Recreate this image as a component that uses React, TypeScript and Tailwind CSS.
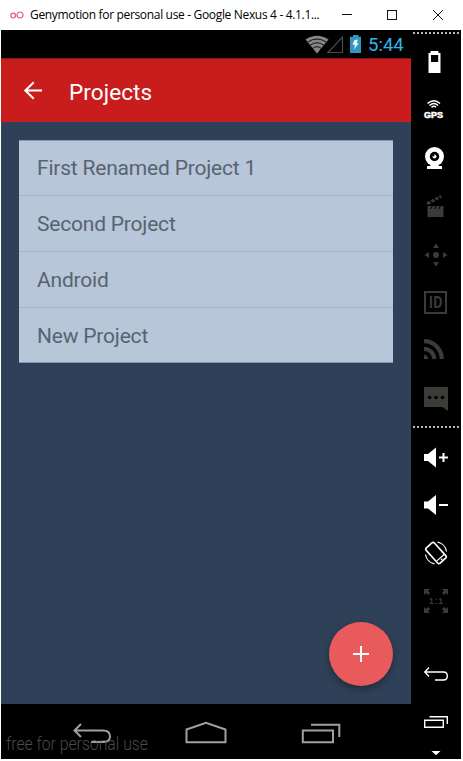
import type { ReactNode } from "react";

const projects = ["First Renamed Project 1", "Second Project", "Android", "New Project"];

function Tool({ children, dim = false, label }: { children: ReactNode; dim?: boolean; label: string }) {
  return (
    <button aria-label={label} className={`flex h-12 w-full items-center pl-[13px] ${dim ? "text-[#3b3b38]" : "text-white"}`}>
      <svg width="24" height="24" viewBox="0 0 24 24" fill="currentColor" className="overflow-visible">
        {children}
      </svg>
    </button>
  );
}

function TitleBar() {
  return (
    <header className="flex h-[30px] items-center bg-white">
      <svg width="14" height="8" viewBox="0 0 14 8" className="ml-[9px]" fill="none" stroke="#e8578f" strokeWidth="1.2">
        <circle cx="3.2" cy="4.6" r="2.4" />
        <circle cx="10" cy="4" r="3" />
      </svg>
      <h1 className="ml-[6px] w-[300px] whitespace-nowrap font-['Open_Sans',sans-serif] text-[12px] leading-[30px] tracking-[-0.33px] text-black">
        Genymotion for personal use - Google Nexus 4 - 4.1.1...
      </h1>
      <svg width="110" height="12" viewBox="0 0 110 12" className="ml-[10px]" fill="none" stroke="#111" shapeRendering="crispEdges">
        <path d="M1.500 5.500H12" />
        <rect x="47.500" y="1.500" width="9" height="9" />
        <path d="M93 1L103 11M103 1L93 11" shapeRendering="auto" />
      </svg>
    </header>
  );
}

function StatusBar() {
  return (
    <div className="flex h-[28px] items-center justify-end bg-black pr-[6px] pt-px">
      <svg width="57" height="20" viewBox="305 35 57 20">
        <path d="M317 53.500L305.500 39.500Q317 32 328.500 39.500Z" fill="#858585" />
        <g fill="none" stroke="#111" strokeWidth="1">
          <path d="M307.500 42.200Q317 35.800 326.500 42.200" />
          <path d="M310 45.300Q317 40.200 324 45.300" />
          <path d="M312.500 48.500Q317 45 321.500 48.500" />
        </g>
        <path d="M328 52.500L342.500 37V52.500Z" fill="none" stroke="#4c4c4c" strokeWidth="1.200" />
        <path d="M350 36.800H353V35H358.500V36.800H361V53H350Z" fill="#3195bd" />
        <path d="M354.500 40L358 39.500L356.800 43L358.700 43.500L353.800 49.500L355 45L352.500 44.500Z" fill="#e5f4fa" />
      </svg>
      <span className="ml-[6px] w-[37px] whitespace-nowrap pt-px font-[Roboto,sans-serif] text-[18.5px] leading-[28px] text-[#33b5e5]">5:44</span>
    </div>
  );
}

function NavBar() {
  return (
    <nav className="relative flex h-[55px] items-center bg-black pl-[71px] pt-[2px]">
      <svg width="40" height="24" viewBox="72 721 40 24" fill="none" stroke="#a0a0a0" strokeWidth="2">
        <path d="M81 724L74.500 730.500L81 737M75 730.500H103Q110 730.500 110 736.500Q110 742 103 742H91" />
      </svg>
      <svg width="44" height="24" viewBox="184 721 44 24" className="ml-[72px]" fill="none" stroke="#a0a0a0" strokeWidth="2">
        <path d="M186.500 742.300V729.500L206 722.700L225.500 729.500V742.300Z" />
      </svg>
      <svg width="42" height="24" viewBox="301 721 42 24" className="ml-[73px]" fill="none" stroke="#a0a0a0" strokeWidth="2">
        <path d="M302.800 730.500H333V742.300H302.800ZM311 724.700H339.300V737" />
      </svg>
      <span className="absolute left-[5px] top-[29px] origin-left scale-x-[0.875] whitespace-nowrap font-[Roboto,sans-serif] text-[18px] font-light leading-[22px] text-[#6c6c6c]/70">
        free for personal use
      </span>
    </nav>
  );
}

function Phone() {
  return (
    <main className="flex w-[410px] flex-col">
      <StatusBar />
      <div className="flex h-[64px] items-center border-t border-[#8a1313] bg-[#c91d1d]">
        <svg width="20" height="20" viewBox="23 81 20 20" className="ml-[22px]" fill="none" stroke="white" strokeWidth="2">
          <path d="M42 90.500H25.500M33.800 82.300L25.300 90.500L33.800 98.800" />
        </svg>
        <h2 className="ml-[26px] pt-[2px] font-[Roboto,sans-serif] text-[22.5px] leading-[28px] tracking-[0.1px] text-white">Projects</h2>
      </div>
      <div className="flex flex-1 flex-col justify-between bg-[#2f4158] px-[18px] pb-[18px] pt-[18px]">
        <ul className="h-[223px] border-y border-[#8494aa] bg-[#b8c6da]">
          {projects.map((name) => (
            <li
              key={name}
              className="flex h-14 items-center border-b border-[#a3b1c4] pl-[18px] pt-[3px] font-[Roboto,sans-serif] text-[21px] tracking-[-0.2px] text-[#59636f] first:h-[55px] first:pt-[2px] last:h-[54px] last:border-b-0"
            >
              {name}
            </li>
          ))}
        </ul>
        <button aria-label="Add project" className="flex size-16 items-center justify-center self-end rounded-full bg-[#e85a5b] shadow-[0_3px_7px_rgba(0,0,0,0.35)]">
          <svg width="16" height="16" viewBox="0 0 16 16" stroke="white" strokeWidth="2">
            <path d="M8 0V16M0 8H16" />
          </svg>
        </button>
      </div>
      <NavBar />
    </main>
  );
}

function Sidebar() {
  return (
    <aside className="flex w-[50px] flex-col bg-black pt-[2px]">
      <div className="ml-[2px] h-[2px] w-[47px] bg-[repeating-linear-gradient(90deg,#b8b8b8_0_2px,#000_2px_4px)]" />
      <div className="mt-[4px]">
        <Tool label="Battery">
          <path fillRule="evenodd" d="M6.500 1H14.500V3H16.500V23H4.500V3H6.500ZM7 5V12H14.200V5Z" />
        </Tool>
        <Tool label="GPS">
          <g fill="none" stroke="currentColor" strokeWidth="1.500">
            <path d="M3.500 5.500Q10 0 16 5.500M5.500 7.500Q10 3.500 14 7.500M7.500 9.300Q10 7.300 12 9.300" />
          </g>
          <text x="0" y="20.200" fontFamily="Liberation Sans" fontWeight="bold" fontSize="8.500" textLength="19" lengthAdjust="spacingAndGlyphs" stroke="currentColor" strokeWidth=".5">GPS</text>
        </Tool>
        <Tool label="Camera">
          <path d="M5.500 16H15.500L14.500 20H18V23H3V20H6.500Z" />
          <circle cx="10.500" cy="10.500" r="9.500" />
          <circle cx="10.500" cy="10.500" r="4.700" fill="black" />
          <circle cx="10.500" cy="10.500" r="2" />
          <circle cx="9.500" cy="9.500" r="1" fill="black" />
        </Tool>
        <Tool label="Screencast" dim>
          <path d="M3.500 12H19.500V23H3.500Z" />
          <path d="M2.300 8.500L16.500 1L18 3.500L4 11Z" />
          <path d="M5.500 6L8.500 9.500M9.500 4L12.500 7.500M13.500 2L16.500 5.500" stroke="black" strokeWidth="1.200" />
          <path d="M8.500 12L6.500 15M12.500 12L10.500 15M16.500 12L14.500 15" stroke="black" strokeWidth="1" />
        </Tool>
        <Tool label="Move" dim>
          <circle cx="12" cy="13" r="3" />
          <path d="M12 1.500L15 6H9ZM12 24.500L15 20H9ZM.5 13L5 10V16ZM23.500 13L19 10V16Z" />
        </Tool>
        <Tool label="Identifiers" dim>
          <path d="M1 2H22V23H1Z" fill="none" stroke="currentColor" strokeWidth="2" />
          <text x="4.800" y="18.200" fontFamily="Open Sans" fontWeight="700" fontSize="15.500" textLength="14" lengthAdjust="spacingAndGlyphs">ID</text>
        </Tool>
        <Tool label="Network" dim>
          <path d="M0 16.700A4.300 4.300 0 0 1 4.300 21H0Z" />
          <path d="M0 10.800A10.200 10.200 0 0 1 10.200 21M0 3.200A17.800 17.800 0 0 1 17.800 21" fill="none" stroke="currentColor" strokeWidth="4.200" />
        </Tool>
        <Tool label="Messages" dim>
          <path d="M0 1H24V25L18.500 21H0Z" />
          <g fill="black">
            <circle cx="5.700" cy="11.500" r="1.800" />
            <circle cx="12" cy="11.500" r="1.800" />
            <circle cx="18.500" cy="11.500" r="1.800" />
          </g>
        </Tool>
      </div>
      <div className="ml-[2px] mt-[4px] h-[2px] w-[47px] bg-[repeating-linear-gradient(90deg,#b8b8b8_0_2px,#000_2px_4px)]" />
      <div className="mt-[5px]">
        <Tool label="Volume up">
          <path d="M0 9H4L12 2.500V22.500L4 16H0ZM15 11.500H18.500V8H20.500V11.500H24V13.500H20.500V17H18.500V13.500H15Z" />
        </Tool>
        <Tool label="Volume down">
          <path d="M0 8.500H4L12 2V22L4 15.500H0ZM15 11H24V13H15Z" />
        </Tool>
        <Tool label="Rotate">
          <g fill="none" stroke="currentColor">
            <g transform="rotate(-42 12 12)">
              <rect x="6.500" y="1.700" width="11" height="20.600" rx="1.800" strokeWidth="1.600" />
              <path d="M7 18.500H17M11 20.500H13" strokeWidth="1.200" />
            </g>
            <path d="M13.500 1.200A11 11 0 0 1 22.500 10.500M10.500 22.800A11 11 0 0 1 1.500 13.500" strokeWidth="1.200" />
          </g>
        </Tool>
        <Tool label="Pixel perfect" dim>
          <path d="M0 0H6L4 2L6 4L4.500 6L2 4L0 6ZM24 0V6L22 4L20 6L18 4L20 2L18 0ZM0 24V18L2 20L4.500 18L6 20L4 22L6 24ZM24 24H18L20 22L18 20L20 18L22 20L24 18Z" />
          <text x="5" y="15" fontFamily="Liberation Sans" fontWeight="bold" fontSize="8.500" textLength="14">1:1</text>
        </Tool>
      </div>
      <div className="mt-[25px]">
        <Tool label="Back">
          <path d="M5 5.500L.8 10L5 14.500M1 10H19.500Q23.300 10 23.300 14Q23.300 18 19.500 18H11" fill="none" stroke="currentColor" strokeWidth="1.400" />
        </Tool>
        <Tool label="Recent apps">
          <path d="M.7 10.200H19.300V17.300H.7ZM5.500 6.700H23.300V14" fill="none" stroke="currentColor" strokeWidth="1.400" />
        </Tool>
      </div>
      <svg width="10" height="5" viewBox="0 0 10 5" className="ml-[20px] mt-[5px]" fill="white">
        <path d="M.5 0H9.500L5 4.300Z" />
      </svg>
    </aside>
  );
}

export default function App() {
  return (
    <div className="h-[761px] w-[463px] overflow-hidden bg-white pl-px">
      <TitleBar />
      <div className="flex h-[729px] w-[460px]">
        <Phone />
        <Sidebar />
      </div>
    </div>
  );
}
